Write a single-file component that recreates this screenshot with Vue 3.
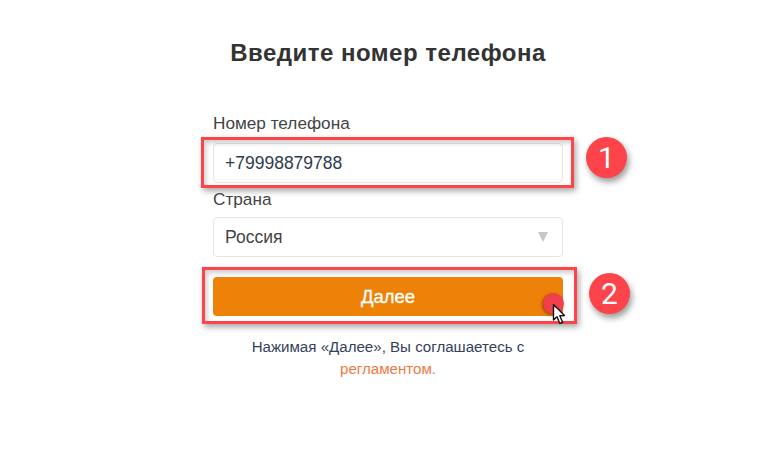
<script setup>
const title = 'Введите номер телефона'
const phone = '+79998879788'
const country = 'Россия'
</script>

<template>
  <div class="page">
    <h1 class="title">{{ title }}</h1>
    <form class="form" @submit.prevent>
      <label class="label first">Номер телефона</label>
      <div class="field phone">{{ phone }}</div>
      <label class="label second">Страна</label>
      <div class="field select">
        <span>{{ country }}</span>
        <i class="arrow"></i>
      </div>
      <button class="next" type="button">Далее</button>
      <p class="terms">
        Нажимая «Далее», Вы соглашаетесь с<br />
        <a class="link">регламентом.</a>
      </p>
    </form>

    <!-- annotations on top of the screenshot -->
    <div class="frame frame-one"></div>
    <div class="frame frame-two"></div>
    <div class="badge badge-one">1</div>
    <div class="badge badge-two">2</div>
    <div class="click-dot"></div>
    <svg class="cursor" width="16" height="24" viewBox="0 0 16 24">
      <path
        d="M1.5 1.5 L1.5 17 L5 13.8 L7.8 20.5 L10.6 19.3 L7.8 12.8 L12.5 12.5 Z"
        fill="#fff"
        stroke="#111"
        stroke-width="1.4"
        stroke-linejoin="round"
      />
    </svg>
  </div>
</template>

<style>
body {
  background: #fff;
}
</style>

<style scoped>
.page {
  position: relative;
  width: 783px;
  height: 454px;
  overflow: hidden;
  background: #fff;
  font-family: 'Liberation Sans', Arial, sans-serif;
  color: #333;
}

.title {
  margin: 0;
  padding: 39px 7px 0 0;
  text-align: center;
  font-size: 24px;
  line-height: 28px;
  font-weight: 700;
  color: #333;
  letter-spacing: 0.5px;
}

.form {
  display: flex;
  flex-direction: column;
  width: 350px;
  margin: 46px 0 0 213px;
}

.label {
  font-size: 17.2px;
  line-height: 20px;
  color: #444;
}

.first {
  margin-bottom: 10px;
}

.second {
  margin-top: 6px;
  margin-bottom: 8px;
}

.field {
  box-sizing: border-box;
  display: flex;
  align-items: center;
  justify-content: space-between;
  height: 40px;
  padding: 0 11px;
  border: 1px solid #e6e6e6;
  border-radius: 4px;
  font-size: 17.5px;
  color: #444;
}

.phone {
  color: #2f3b4a;
}

.arrow {
  width: 0;
  height: 0;
  margin-right: 3px;
  border-left: 5.5px solid transparent;
  border-right: 5.5px solid transparent;
  border-top: 10px solid #c8c8c8;
}

.next {
  height: 39px;
  margin-top: 20px;
  border: 0;
  border-radius: 4px;
  background: #ee8208;
  color: #fff;
  font-family: inherit;
  font-size: 18.5px;
  font-weight: 400;
  -webkit-text-stroke: 0.3px #fff;
}

.terms {
  margin: 20px 0 0;
  text-align: center;
  font-size: 15.1px;
  line-height: 22px;
  color: #36415a;
}

.link {
  color: #ee7b43;
}

.frame {
  position: absolute;
  box-sizing: border-box;
  border: 3px solid #fc444a;
  box-shadow: 2px 3px 6px rgba(0, 0, 0, 0.35), inset 2px 3px 5px rgba(0, 0, 0, 0.2);
}

.frame-one {
  left: 201px;
  top: 137px;
  width: 373px;
  height: 51px;
}

.frame-two {
  left: 202px;
  top: 267px;
  width: 375px;
  height: 57px;
}

.badge {
  position: absolute;
  width: 41px;
  height: 41px;
  display: flex;
  align-items: center;
  justify-content: center;
  border-radius: 50%;
  background: #fc444a;
  color: #fff;
  font-family: Roboto, 'Liberation Sans', sans-serif;
  font-size: 30px;
  box-shadow: 2px 4px 6px rgba(0, 0, 0, 0.4);
}

.badge-one {
  left: 586px;
  top: 137px;
}

.badge-two {
  left: 589px;
  top: 273px;
}

.click-dot {
  position: absolute;
  left: 543px;
  top: 293px;
  width: 21px;
  height: 21px;
  border-radius: 50%;
  background: #f0404c;
  box-shadow: -1px 1px 3px rgba(90, 30, 0, 0.6);
}

.cursor {
  position: absolute;
  left: 552px;
  top: 303px;
}
</style>
